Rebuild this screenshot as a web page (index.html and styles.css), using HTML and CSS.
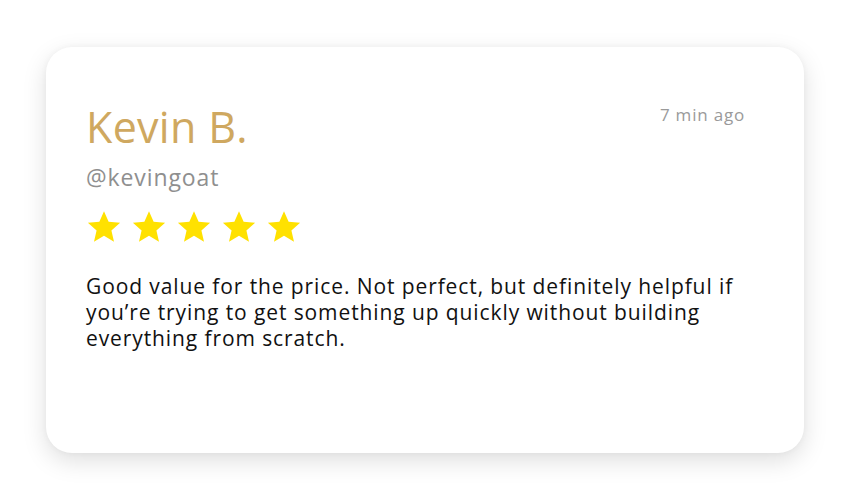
FILE: index.html
```html
<!DOCTYPE html>
<html>
<head>
<meta charset="utf-8">
<link rel="stylesheet" href="styles.css">
</head>
<body>
<div class="card">
  <div class="header">
    <div class="who">
      <div class="name">Kevin B.</div>
      <div class="handle">@kevingoat</div>
    </div>
    <div class="time">7 min ago</div>
  </div>
  <div class="stars">
    <svg viewBox="0 0 24 24" class="star"><path d="M12 1.5l3.09 7.03 7.64.7-5.78 5.06 1.72 7.48L12 17.8l-6.67 3.97 1.72-7.48L1.27 9.23l7.64-.7z"/></svg>
    <svg viewBox="0 0 24 24" class="star"><path d="M12 1.5l3.09 7.03 7.64.7-5.78 5.06 1.72 7.48L12 17.8l-6.67 3.97 1.72-7.48L1.27 9.23l7.64-.7z"/></svg>
    <svg viewBox="0 0 24 24" class="star"><path d="M12 1.5l3.09 7.03 7.64.7-5.78 5.06 1.72 7.48L12 17.8l-6.67 3.97 1.72-7.48L1.27 9.23l7.64-.7z"/></svg>
    <svg viewBox="0 0 24 24" class="star"><path d="M12 1.5l3.09 7.03 7.64.7-5.78 5.06 1.72 7.48L12 17.8l-6.67 3.97 1.72-7.48L1.27 9.23l7.64-.7z"/></svg>
    <svg viewBox="0 0 24 24" class="star"><path d="M12 1.5l3.09 7.03 7.64.7-5.78 5.06 1.72 7.48L12 17.8l-6.67 3.97 1.72-7.48L1.27 9.23l7.64-.7z"/></svg>
  </div>
  <p class="text">Good value for the price. Not perfect, but definitely helpful if you’re trying to get something up quickly without building everything from scratch.</p>
</div>
</body>
</html>
```

FILE: styles.css
```css
html, body {
  margin: 0;
  padding: 0;
  background: #ffffff;
}
body {
  box-sizing: border-box;
  min-height: 496px;
  padding: 47px 0 0 46px;
  font-family: "Open Sans", "Liberation Sans", sans-serif;
}
.card {
  box-sizing: border-box;
  width: 758px;
  height: 406px;
  background: #fff;
  border-radius: 26px;
  box-shadow: 0 8px 24px rgba(0,0,0,0.13), 0 0 6px rgba(0,0,0,0.04);
  padding: 54px 59px 0 40px;
}
.header {
  display: flex;
  justify-content: space-between;
  align-items: flex-start;
}
.name {
  color: #cfa860;
  font-size: 43px;
  line-height: 52px;
  font-weight: 400;
  letter-spacing: 0.3px;
}
.handle {
  color: #8f8f8f;
  font-size: 23px;
  line-height: 28px;
  margin-top: 10px;
  letter-spacing: 0.9px;
}
.time {
  color: #9a9a9a;
  font-size: 17px;
  line-height: 22px;
  margin-top: 3px;
  letter-spacing: 0.8px;
}
.stars {
  display: flex;
  gap: 9px;
  margin-top: 18px;
}
.star {
  width: 36px;
  height: 36px;
  fill: #ffe100;
}
.text {
  margin: 28px 0 0 0;
  color: #111;
  font-size: 21px;
  line-height: 26px;
  letter-spacing: 0.9px;
}
```
